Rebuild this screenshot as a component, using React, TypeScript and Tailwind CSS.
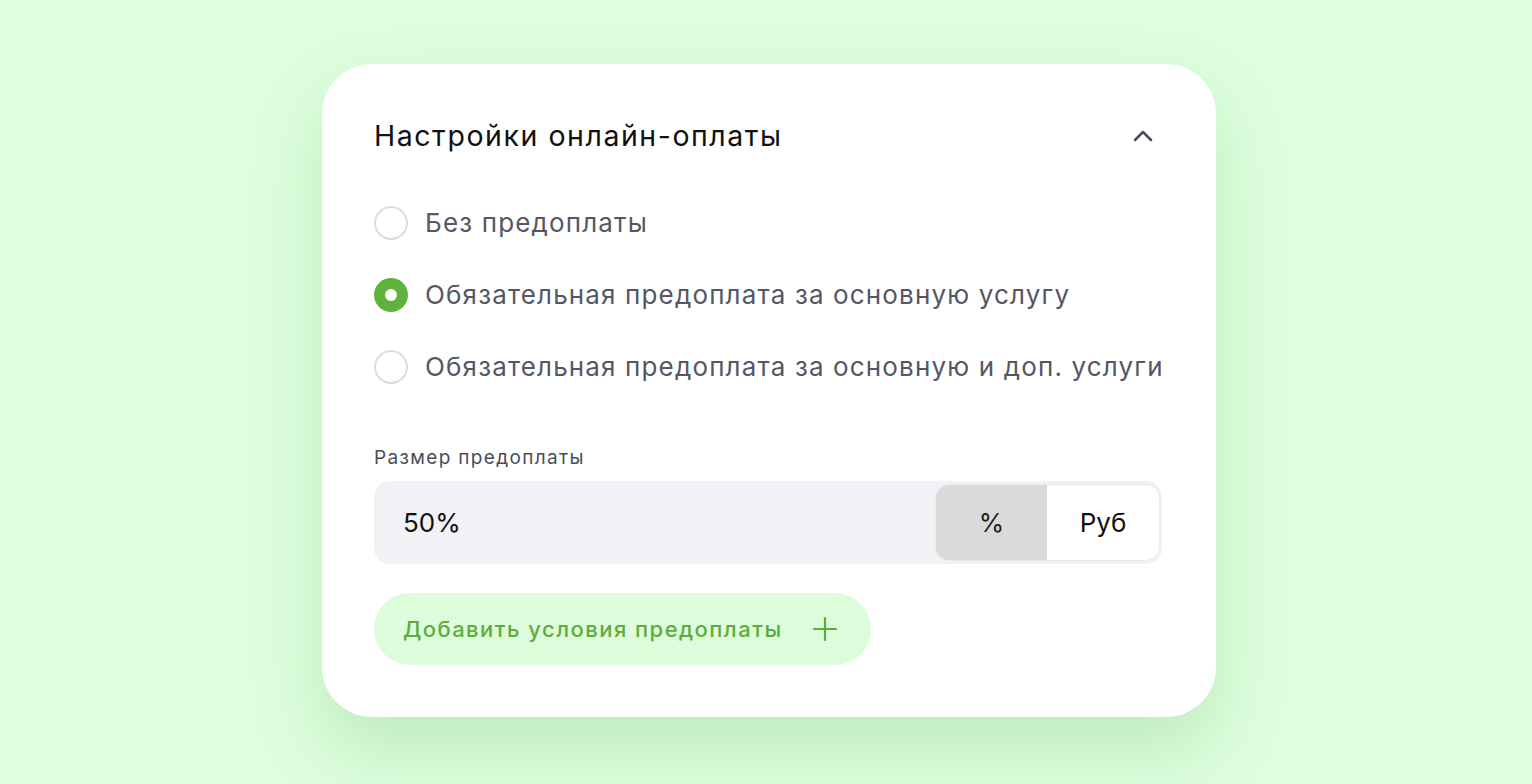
import React from "react";

function Radio({ checked, label }: { checked?: boolean; label: string }) {
  return (
    <div className="flex h-[36px] items-center">
      {checked ? (
        <div className="flex h-[34px] w-[34px] items-center justify-center rounded-full bg-[#5fb33c]">
          <div className="h-[12px] w-[12px] rounded-full bg-white" />
        </div>
      ) : (
        <div className="h-[34px] w-[34px] rounded-full border-2 border-[#dcdcdf] bg-white" />
      )}
      <span className="ml-[17px] text-[26px] leading-[34px] tracking-[1.15px] text-[#545764]">{label}</span>
    </div>
  );
}

export default function App() {
  return (
    <div
      className="min-h-[784px] w-full bg-[#defede] pt-[64px]"
      style={{ fontFamily: "Inter, 'Noto Sans', sans-serif" }}
    >
      <div className="ml-[322px] h-[653px] w-[894px] rounded-[50px] bg-white px-[52px] pt-[55px] shadow-[0_34px_70px_rgba(80,170,80,0.22)]">
        <div className="flex h-[34px] items-center justify-between">
          <h1 className="text-[28.5px] leading-[34px] tracking-[1.55px] text-[#111111]">Настройки онлайн-оплаты</h1>
          <svg width="20" height="12" viewBox="0 0 20 12" className="mr-[11px]" fill="none">
            <path d="M2 10 L10 2 L18 10" stroke="#4b4e5c" strokeWidth="2.5" strokeLinecap="round" strokeLinejoin="round" />
          </svg>
        </div>
        <div className="mt-[52px] flex flex-col gap-[36px]">
          <Radio label="Без предоплаты" />
          <Radio checked label="Обязательная предоплата за основную услугу" />
          <Radio label="Обязательная предоплата за основную и доп. услуги" />
        </div>
        <div className="mt-[61px] text-[19px] leading-[24px] tracking-[1.35px] text-[#4a4d57]">Размер предоплаты</div>
        <div className="mt-[11px] flex h-[83px] w-[788px] items-center rounded-[16px] bg-[#f2f2f6] pl-[29px] pr-[2px]">
          <span className="flex-1 text-[26px] text-[#111111]">50%</span>
          <div className="flex h-[77px] w-[225px] overflow-hidden rounded-[14px] border border-[#ebebed] bg-white">
            <div className="flex w-[111px] items-center justify-center bg-[#dadadb] text-[26px] text-[#222]">%</div>
            <div className="flex flex-1 items-center justify-center text-[26px] text-[#111]">Руб</div>
          </div>
        </div>
        <button className="mt-[29px] flex h-[72px] items-center rounded-full bg-[#dcfcdc] pl-[29px] pr-[33px]">
          <span className="text-[22px] font-medium tracking-[1.45px] text-[#5cad39]">Добавить условия предоплаты</span>
          <svg width="26" height="26" viewBox="0 0 26 26" className="ml-[29px]" fill="none">
            <path d="M13 2 V24 M2 13 H24" stroke="#5cad39" strokeWidth="2.2" strokeLinecap="round" />
          </svg>
        </button>
      </div>
    </div>
  );
}
